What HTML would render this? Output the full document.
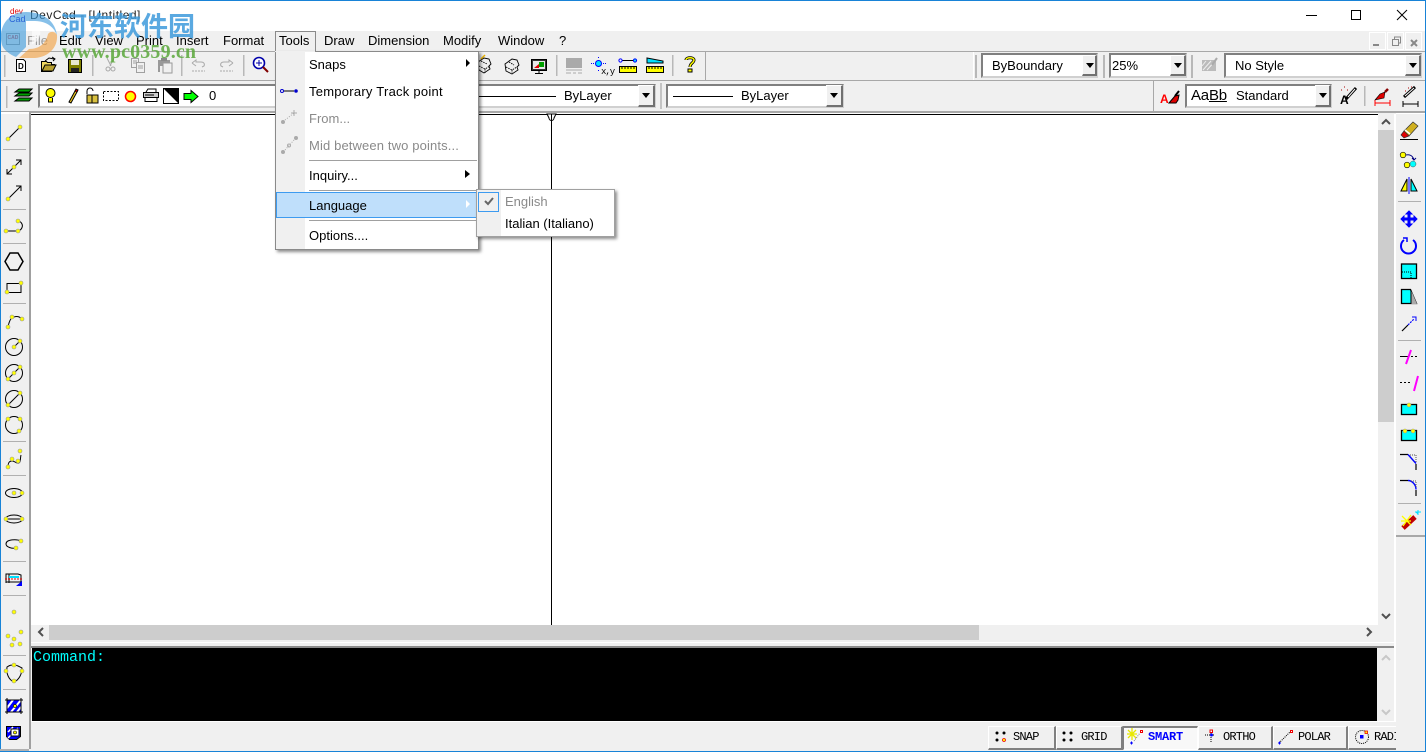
<!DOCTYPE html>
<html><head><meta charset="utf-8"><title>DevCad</title>
<style>
html,body{margin:0;padding:0;background:#f0f0f0}
#r{position:relative;width:1426px;height:752px;overflow:hidden;background:#f0f0f0;font-family:"DejaVu Sans","Liberation Sans",sans-serif;font-size:12px;color:#000}
#r div{position:absolute;box-sizing:border-box}
.t{position:absolute;white-space:nowrap;line-height:16px;font-family:"Liberation Sans",sans-serif;letter-spacing:0;font-size:13px}
.g{color:#8a8a8a}
.c{background:#fff;border:2px solid;border-color:#808080 #d0d0d0 #d0d0d0 #808080}
.d{background:#f0f0f0;border:1px solid;border-color:#fff #707070 #707070 #fff;border-width:1px 2px 2px 1px}
.d:after{content:"";position:absolute;left:3px;top:7px;border:4px solid transparent;border-top:5px solid #000;border-bottom:0}
.s{background:#f0f0f0;border:1px solid;border-color:#fff #808080 #808080 #fff;border-width:1px 2px 2px 1px}
.m{font-family:"Liberation Mono",monospace;font-size:12px;position:absolute;white-space:nowrap;top:731px;line-height:13px;letter-spacing:-.8px}
svg{position:absolute;left:0;top:0}
</style></head><body><div id="r">
<!-- title -->
<div style="left:0;top:0;width:1426px;height:31px;background:#fff"></div>
<div style="left:0;top:0;width:1426px;height:1px;background:#1883d7"></div>
<span class="t" style="left:30px;top:7px;font-size:12px;letter-spacing:.5px;color:#222">DevCad - [Untitled]</span>
<!-- menu bar -->
<div style="left:0;top:51px;width:1426px;height:1px;background:#a8a8a8"></div>
<span class="t" style="left:27px;top:33px;color:#999">File</span>
<span class="t" style="left:59px;top:33px">Edit</span>
<span class="t" style="left:95px;top:33px">View</span>
<span class="t" style="left:136px;top:33px">Print</span>
<span class="t" style="left:176px;top:33px">Insert</span>
<span class="t" style="left:223px;top:33px">Format</span>
<span class="t" style="left:324px;top:33px">Draw</span>
<span class="t" style="left:368px;top:33px">Dimension</span>
<span class="t" style="left:443px;top:33px">Modify</span>
<span class="t" style="left:498px;top:33px">Window</span>
<span class="t" style="left:559px;top:33px">?</span>
<!-- toolbars -->
<div style="left:0;top:80px;width:1426px;height:1px;background:#a8a8a8"></div>
<div style="left:0;top:111px;width:1426px;height:2px;background:#a8a8a8"></div>
<div style="left:705px;top:52px;width:1px;height:28px;background:#a8a8a8"></div>
<div style="left:973px;top:52px;width:1px;height:28px;background:#fff"></div>
<div style="left:1153px;top:81px;width:1px;height:30px;background:#a8a8a8"></div>
<div class="c" style="left:981px;top:53px;width:117px;height:25px"></div>
<div class="d" style="left:1082px;top:55px;width:15px;height:21px"></div>
<span class="t" style="left:992px;top:58px">ByBoundary</span>
<div class="c" style="left:1109px;top:53px;width:78px;height:25px"></div>
<div class="d" style="left:1170px;top:55px;width:16px;height:21px"></div>
<span class="t" style="left:1112px;top:58px">25%</span>
<div class="c" style="left:1224px;top:53px;width:198px;height:25px"></div>
<div class="d" style="left:1405px;top:55px;width:16px;height:21px"></div>
<span class="t" style="left:1235px;top:58px">No Style</span>
<div class="c" style="left:38px;top:84px;width:240px;height:24px"></div>
<span class="t" style="left:209px;top:88px">0</span>
<div class="c" style="left:470px;top:84px;width:186px;height:24px"></div>
<div class="d" style="left:638px;top:85px;width:17px;height:22px"></div>
<div style="left:479px;top:96px;width:77px;height:1px;background:#000"></div>
<span class="t" style="left:564px;top:88px">ByLayer</span>
<div style="left:660px;top:83px;width:2px;height:26px;background:#c4c4c4"></div>
<div class="c" style="left:666px;top:84px;width:178px;height:24px"></div>
<div class="d" style="left:826px;top:85px;width:17px;height:22px"></div>
<div style="left:673px;top:96px;width:60px;height:1px;background:#000"></div>
<span class="t" style="left:741px;top:88px">ByLayer</span>
<div class="c" style="left:1185px;top:84px;width:147px;height:24px"></div>
<div class="d" style="left:1315px;top:85px;width:16px;height:22px"></div>
<span class="t" style="left:1191px;top:88px;font-size:15px;letter-spacing:-.2px">Aa<u>Bb</u></span>
<span class="t" style="left:1236px;top:88px">Standard</span>
<!-- MDI buttons -->
<div style="left:1369px;top:32px;width:17px;height:18px;border:1px solid #fff"></div>
<div style="left:1387px;top:32px;width:17px;height:18px;border:1px solid #fff"></div>
<div style="left:1405px;top:32px;width:17px;height:18px;border:1px solid #fff"></div>
<!-- drawing -->
<div style="left:29px;top:113px;width:2px;height:636px;background:#a0a0a0"></div>
<div style="left:31px;top:113px;width:1347px;height:512px;background:#fff"></div>
<div style="left:31px;top:114px;width:1347px;height:1px;background:#000"></div>
<div style="left:551px;top:114px;width:1px;height:511px;background:#000"></div>
<!-- v scrollbar -->
<div style="left:1378px;top:114px;width:16px;height:511px;background:#f0f0f0"></div>
<div style="left:1378px;top:130px;width:16px;height:292px;background:#cdcdcd"></div>
<!-- h scrollbar -->
<div style="left:49px;top:625px;width:930px;height:15px;background:#cdcdcd"></div>
<div style="left:31px;top:642px;width:1363px;height:1px;background:#fff"></div>
<div style="left:31px;top:646px;width:1363px;height:2px;background:#8a8a8a"></div>
<!-- command -->
<div style="left:32px;top:648px;width:1345px;height:73px;background:#000"></div>
<div style="left:1394px;top:114px;width:2px;height:608px;background:#fff"></div>
<div style="left:31px;top:721px;width:1365px;height:1px;background:#fff"></div>
<span style="position:absolute;left:33px;top:649px;font:15px/17px 'Liberation Mono',monospace;color:#00ffff;white-space:nowrap">Command:</span>
<!-- right toolbar -->
<div style="left:1396px;top:113px;width:29px;height:1px;background:#fff"></div>
<div style="left:1396px;top:535px;width:29px;height:2px;background:#a8a8a8"></div>
<!-- status bar -->
<div class="s" style="left:988px;top:726px;width:68px;height:24px"></div>
<div class="s" style="left:1056px;top:726px;width:67px;height:24px"></div>
<div style="left:1123px;top:726px;width:75px;height:24px;border:1px solid;border-color:#808080 #fff #fff #808080;border-width:2px 1px 1px 1px;background:#f8f8f8"></div>
<div class="s" style="left:1198px;top:726px;width:75px;height:24px"></div>
<div class="s" style="left:1273px;top:726px;width:75px;height:24px"></div>
<div class="s" style="left:1348px;top:726px;width:60px;height:24px"></div>
<span class="m" style="left:1013px">SNAP</span>
<span class="m" style="left:1081px">GRID</span>
<span class="m" style="left:1148px;color:#00f;font-weight:bold;letter-spacing:-.2px">SMART</span>
<span class="m" style="left:1223px">ORTHO</span>
<span class="m" style="left:1298px">POLAR</span>
<span class="m" style="left:1374px">RADI</span>
<div style="left:1396px;top:722px;width:30px;height:30px;background:#f0f0f0"></div>
<!-- frame -->
<div style="left:0;top:0;width:1px;height:752px;background:#1883d7"></div>
<div style="left:1425px;top:0;width:1px;height:752px;background:#1883d7"></div>
<div style="left:0;top:751px;width:1426px;height:1px;background:#1883d7"></div>

<svg width="1426" height="752" viewBox="0 0 1426 752" fill="none">
<defs><g id="y"><circle r="2" fill="#ffff00" stroke="#999" stroke-width=".6"/></g></defs>
<!-- window controls -->
<path d="M1306 15.500h11" stroke="#000"/>
<rect x="1351.500" y="10.500" width="9" height="9" stroke="#000"/>
<path d="M1397 10l10 10M1407 10l-10 10" stroke="#000"/>
<path d="M1373 45h6" stroke="#888" stroke-width="2"/>
<path d="M1392.500 45.500h6v-6h-6zM1394.500 39v-2h6v6h-2" stroke="#888"/>
<path d="M1411 40l6 6M1417 40l-6 6" stroke="#888" stroke-width="2"/>
<!-- toolbar separators / grips -->
<g fill="#b8b8b8">
<rect x="92" y="55" width="1.500" height="21"/><rect x="181" y="55" width="1.500" height="21"/><rect x="243" y="55" width="1.500" height="21"/>
<rect x="556" y="55" width="1.500" height="21"/><rect x="672" y="55" width="1.500" height="21"/>
<rect x="4" y="55" width="1.500" height="22"/><rect x="6" y="86" width="1.500" height="22"/>
<rect x="975" y="55" width="2" height="23"/><rect x="1103" y="55" width="2" height="23"/><rect x="1191" y="55" width="2" height="23"/>
<rect x="1364" y="86" width="1.500" height="20"/>
</g>
<!-- app icon -->
<text x="10" y="14" font-family="Liberation Sans" font-size="8" fill="#d00">dev</text>
<text x="9" y="22" font-family="Liberation Sans" font-size="9" fill="#00c">Cad</text>
<rect x="6.500" y="33.500" width="13" height="11" stroke="#999" fill="#eee"/>
<text x="7.500" y="39" font-family="Liberation Sans" font-size="5" font-weight="bold" fill="#c44">CAD</text>
<!-- toolbar1 icons -->
<path d="M16.500 59.500h7l2 2v10h-9z" fill="#fff" stroke="#000"/><text x="18" y="69" font-family="Liberation Sans" font-size="8" font-weight="bold" fill="#000">D</text>
<path d="M41.500 71.500v-10h5l1 1h4v2h3l-3 7z" fill="#f0d860" stroke="#000"/><path d="M45 61l4-3 5 1M52 57l3 2-2 2" stroke="#000"/><path d="M42 71l3-6h11l-3 6z" fill="#b8a030" stroke="#000"/>
<rect x="68.500" y="59.500" width="13" height="13" fill="#808000" stroke="#000"/><rect x="71" y="60" width="8" height="5" fill="#e8e8d0"/><rect x="71" y="68" width="8" height="4" fill="#222"/>
<g stroke="#a8a8a8"><path d="M107 58l4 8M114 58l-4 8"/><circle cx="108" cy="69" r="2"/><circle cx="113" cy="69" r="2"/></g>
<g stroke="#a0a0a0" fill="#f0f0f0"><path d="M131.500 58.500h7v9h-7z"/><path d="M136.500 62.500h8v10h-8z"/><path d="M133 61h4M133 63h3M138 66h5M138 68h5"/></g>
<path d="M158 60h12v3h-2v3h-8v6h-2z" fill="#999"/><rect x="163" y="63" width="9" height="10" fill="#f0f0f0" stroke="#999"/><rect x="161" y="58" width="6" height="3" fill="#888"/>
<path d="M192 63l4-3v2h5c3 0 4 2 3 4l-2 1M192 63l4 3" stroke="#aaa"/><path d="M192 71h13" stroke="#aaa" stroke-dasharray="2 1"/>
<path d="M233 63l-4-3v2h-5c-3 0-4 2-3 4l2 1M233 63l-4 3" stroke="#aaa"/><path d="M220 71h13" stroke="#aaa" stroke-dasharray="2 1"/>
<circle cx="259" cy="63" r="5.500" fill="#fff" stroke="#00a" stroke-width="1.600"/><path d="M256 63h6M259 60v6" stroke="#00a"/><path d="M263 67l5 5" stroke="#800000" stroke-width="2"/>
<!-- toolbar1 right group -->
<g stroke="#000" fill="#f0f0f0" stroke-width=".9"><path d="M478 62l6-4 5 1 2 5-2 2 1 3-6 4-5-3-1-4z"/><path d="M479 66l6 3 5-3M485 69v4M481 61l6 3" fill="none" stroke-dasharray="1.500 1"/><path d="M505 64l7-5 5 1 2 5-2 2 1 3-6 4-6-3z"/><path d="M506 67l6 3 5-3M512 70v3M509 62l5 3" fill="none" stroke-dasharray="1.500 1"/></g>
<path d="M481 59l4-4" stroke="#e8b000" stroke-width="1.500"/>
<rect x="531.500" y="59.500" width="15" height="11" fill="#fff" stroke="#000"/><rect x="532.500" y="60.500" width="13" height="9" fill="#e8e8e8" stroke="#333"/><path d="M534 68l5-4v4z" fill="#e00000"/><rect x="539" y="62" width="5" height="5" fill="#00a000"/><path d="M539 71v2M535 73.500h8" stroke="#000"/>
<g fill="#aaa"><rect x="566" y="58" width="16" height="10"/></g><path d="M566 70h16M566 73h5M573 73h3M578 73h4" stroke="#aaa"/>
<circle cx="598.500" cy="63.500" r="3" fill="#00e0ff" stroke="#00f"/><path d="M598.500 58v-2M598.500 71v-2M591 63.500h3M603 63.500h3" stroke="#00f" stroke-dasharray="1 1"/><text x="601" y="74" font-family="Liberation Mono" font-size="9" letter-spacing="-1" fill="#000">x,y</text>
<path d="M622 60.500h12" stroke="#000"/><circle cx="620.500" cy="60.500" r="1.600" fill="#fff" stroke="#00f"/><circle cx="635" cy="60.500" r="1.600" fill="#00e0ff" stroke="#00f"/>
<rect x="619.500" y="66.500" width="17" height="6" fill="#ffff00" stroke="#000"/><path d="M622 67v2M625 67v2M628 67v2M631 67v2M634 67v2" stroke="#000"/>
<path d="M647 58v5h16v-2z" fill="#00e0ff" stroke="#000"/><rect x="646.500" y="66.500" width="17" height="6" fill="#ffff00" stroke="#000"/><path d="M649 67v2M652 67v2M655 67v2M658 67v2M661 67v2" stroke="#000"/>
<path d="M686 60c0-3 8-3 8 0 0 3-4 3-4 7" stroke="#000" stroke-width="3"/><path d="M686 60c0-3 8-3 8 0 0 3-4 3-4 7" stroke="#ff0" stroke-width="1.400"/><rect x="688" y="69" width="4" height="3" fill="#ff0" stroke="#000"/>
<!-- right row1 hatch -->
<rect x="1202" y="60" width="14" height="11" fill="#bbb"/><path d="M1203 70l8-9M1207 70l8-9M1202 66l4-5" stroke="#eee"/><path d="M1212 65l5-7" stroke="#aaa" stroke-width="2"/>
<!-- toolbar2 -->
<g stroke="#000" fill="#00a000"><path d="M15 92h14l3-3h-13z"/><path d="M15 96h14l3-3h-13z"/><path d="M15 101h14l3-3h-13z"/></g>
<circle cx="50.500" cy="93" r="4.500" fill="#ff0" stroke="#000"/><path d="M48.500 98v4h4v-4" fill="#ff0" stroke="#000"/>
<path d="M69 102l6-11 2 1-6 11z" fill="#e8c020" stroke="#000"/><path d="M75 91l1-2 2 1-1 2" fill="#d00" stroke="#000"/>
<path d="M87 94v-3a3 3 0 0 1 6 0" stroke="#000"/><path d="M87 103v-8h11v8z" fill="#d8c040" stroke="#000"/><path d="M92 95v8" stroke="#000"/>
<rect x="103.500" y="91.500" width="15" height="9" stroke="#000" stroke-dasharray="2 1.500"/>
<circle cx="130.500" cy="96.500" r="5" fill="#ff0" stroke="#f00" stroke-width="1.500"/>
<path d="M146 92l2-3h8v3" fill="#fff" stroke="#000"/><rect x="143.500" y="92.500" width="15" height="5" fill="#ccc" stroke="#000"/><path d="M145 97.500h12v4h-12z" fill="#fff" stroke="#000"/><path d="M145 95h9" stroke="#000"/>
<rect x="163.500" y="88.500" width="15" height="15" fill="#fff" stroke="#000"/><path d="M164 89h15v15z" fill="#000"/>
<path d="M184 93.500h7v-3l7 6-7 6v-3h-7z" fill="#00ff00" stroke="#000"/>
<!-- toolbar2 right -->
<text x="1160" y="103" font-family="Liberation Sans" font-weight="bold" font-size="12" fill="#f00">A</text>
<path d="M1169 103l6-7 4-1-1 5-2 3z" fill="#d00" stroke="#000"/><path d="M1175 96l4-5" stroke="#000" stroke-width="2"/>
<text x="1340" y="104" font-family="Liberation Sans" font-weight="bold" font-size="12" fill="#000">A</text>
<path d="M1346 99l10-11" stroke="#000" stroke-width="3"/><path d="M1348 97l7-8" stroke="#fff"/><path d="M1341 90h1M1344 87h1M1347 90h1" stroke="#a00"/>
<path d="M1375 100l5-6 5-2-1 6z" fill="#d00" stroke="#000" stroke-width=".6"/><path d="M1385 92l3-3" stroke="#800" stroke-width="2.500"/><path d="M1375 103h15M1375 100v6M1390 100v6" stroke="#f00"/>
<path d="M1404 97l11-10" stroke="#000" stroke-width="3"/><path d="M1405 96l9-8" stroke="#fff"/><path d="M1403 104h15M1403 101v6M1418 101v6" stroke="#000"/><path d="M1405 91h1M1408 88h1M1411 87h1" stroke="#a00"/>
<!-- aperture -->
<path d="M547 114h9l-2 4a2.500 2.500 0 0 1-5 0z" fill="#fff" stroke="#000"/><path d="M551.500 114v6" stroke="#000"/>
<!-- scroll arrows -->
<g stroke="#505050" stroke-width="2"><path d="M1382 124l4-4 4 4M1382 614l4 4 4-4M43 628l-4 4 4 4M1367 628l4 4-4 4"/></g>
<g stroke="#c8c8c8" stroke-width="2"><path d="M1382 660l4-4 4 4M1382 710l4 4 4-4"/></g>
<!-- left toolbar separators -->
<g fill="#b0b0b0"><rect x="3" y="149" width="23" height="1"/><rect x="3" y="209" width="23" height="1"/><rect x="3" y="243" width="23" height="1"/><rect x="3" y="303" width="23" height="1"/><rect x="3" y="441" width="23" height="1"/><rect x="3" y="475" width="23" height="1"/><rect x="3" y="561" width="23" height="1"/><rect x="3" y="595" width="23" height="1"/><rect x="3" y="655" width="23" height="1"/><rect x="3" y="689" width="23" height="1"/><rect x="0" y="749" width="29" height="2"/>
<rect x="1398" y="201" width="23" height="1"/><rect x="1398" y="340" width="23" height="1"/><rect x="1398" y="503" width="23" height="1"/></g>
<rect x="1" y="112" width="28" height="2" fill="#fff"/>
<!-- left tool icons -->
<g stroke="#000" stroke-width="1">
<path d="M8 139l12-12"/>
<path d="M7 174l14-14M7 169v5h5M16 160h5v5" />
<path d="M8 199l13-13M16 186h5v5"/>
<path d="M6 231h12c4-1 5-5 4-7-1-2-2-3-4-3"/>
<path d="M10 253h8l5 8.500-5 8.500h-8l-5-8.500z" stroke-width="1.500"/>
<path d="M7 283.500h14v9h-14z"/>
<path d="M8 327c1-5 3-10 6-10 3-1 6 0 8 2"/>
<circle cx="14" cy="347" r="8.500"/><path d="M14 347l6-6"/>
<circle cx="14" cy="373" r="8.500"/><path d="M8 379l12-12"/>
<circle cx="14" cy="399" r="8.500"/><path d="M8 405l12-12"/>
<circle cx="14" cy="425" r="8.500"/>
<path d="M8 467c0-4 1-6 4-6s3 2 6 2 2-4 3-8"/>
<ellipse cx="14" cy="493" rx="8.500" ry="4.500"/>
<ellipse cx="14" cy="519" rx="8.500" ry="4"/><path d="M6 519h16"/>
<path d="M21 541c-4-2-15-2-15 3 0 3 6 5 10 4"/>
<path d="M6 574h12l3 1v7h-15z"/>
<path d="M6 574v9M9 574v9"/>
<path d="M7 667c3-2 4-2 7-2s4 1 8 3c0 6-3 12-8 14-5-2-8-8-7-15z"/>
</g>
<path d="M5 579h17" stroke="#e00" stroke-dasharray="2 1"/><path d="M9 576h10v2h-10z" fill="#00e0ff"/><path d="M16 586l6-5v5z" fill="#00f"/>
<use href="#y" x="8" y="139"/><use href="#y" x="20" y="127"/>
<use href="#y" x="14" y="167"/>
<use href="#y" x="8" y="199"/>
<use href="#y" x="6" y="231"/><use href="#y" x="18" y="231"/><use href="#y" x="18" y="221"/>
<use href="#y" x="7" y="292"/><use href="#y" x="21" y="283"/>
<use href="#y" x="8" y="327"/><use href="#y" x="12" y="317"/><use href="#y" x="22" y="319"/>
<use href="#y" x="14" y="347"/><use href="#y" x="20" y="341"/>
<use href="#y" x="8" y="379"/><use href="#y" x="14" y="373"/><use href="#y" x="20" y="367"/>
<use href="#y" x="8" y="405"/><use href="#y" x="20" y="393"/>
<use href="#y" x="8" y="419"/><use href="#y" x="20" y="419"/><use href="#y" x="19" y="431"/>
<use href="#y" x="8" y="467"/><use href="#y" x="12" y="459"/><use href="#y" x="18" y="461"/><use href="#y" x="20" y="451"/>
<use href="#y" x="14" y="493"/><use href="#y" x="22" y="493"/>
<use href="#y" x="6" y="519"/><use href="#y" x="22" y="519"/>
<use href="#y" x="21" y="541"/><use href="#y" x="16" y="548"/>
<use href="#y" x="14" y="612"/>
<use href="#y" x="8" y="636"/><use href="#y" x="21" y="632"/><use href="#y" x="14" y="639"/><use href="#y" x="12" y="645"/><use href="#y" x="20" y="644"/>
<use href="#y" x="14" y="665"/><use href="#y" x="6" y="671"/><use href="#y" x="22" y="671"/><use href="#y" x="14" y="681"/>
<!-- hatch -->
<rect x="7" y="700" width="14" height="12" fill="#00f"/><path d="M7 708l6-8M11 712l10-12M17 712l4-5" stroke="#fff" stroke-width="2"/><path d="M5 700h18M5 712h18M7 698v16M21 698v16" stroke="#000"/><circle cx="15" cy="706" r="1.600" fill="#ff0" stroke="#000" stroke-width=".6"/>
<path d="M6.500 726.500h14v10l-4 3h-7l-3-3z" fill="#00f" stroke="#000"/><path d="M8 732l5-5M8 738l10-10" stroke="#fff" stroke-width="1.500"/><rect x="11" y="729" width="8" height="7" fill="#fff" stroke="#000"/><circle cx="15" cy="732.500" r="1.500" fill="#ff0" stroke="#000" stroke-width=".6"/>
<!-- right tool icons -->
<path d="M1400 139.500h18" stroke="#000"/><path d="M1404 131l9-9 5 4-9 10z" fill="#d0b020" stroke="#333" stroke-width=".7"/><path d="M1404 131l-3 4 3 3 5-2z" fill="#e00000" stroke="#333" stroke-width=".7"/><path d="M1405 130l5 4" stroke="#fff" stroke-width="1.500"/>
<circle cx="1403" cy="155" r="2.800" fill="#ff0" stroke="#000" stroke-width=".6"/><circle cx="1407" cy="165" r="2.800" fill="#ff0" stroke="#000" stroke-width=".6"/><circle cx="1413" cy="164" r="3" fill="#00ffff" stroke="#555" stroke-width=".5"/><path d="M1406 155c4-1 7 1 8 5M1412 158l2 2 2-2" stroke="#000080"/>
<path d="M1407 179l-6 12h6z" fill="#ff0" stroke="#000"/><path d="M1411 179l6 12h-6z" fill="#00ffff" stroke="#000"/><path d="M1409 177v17" stroke="#00f"/>
<path d="M1409 211l3 3h-2v4h4v-2l3 3-3 3v-2h-4v4h2l-3 3-3-3h2v-4h-4v2l-3-3 3-3v2h4v-4h-2z" fill="#00f" stroke="#00f"/>
<path d="M1404 240a7.500 7.500 0 1 0 9 0" stroke="#00f" stroke-width="2"/><path d="M1403 238h4v4" stroke="#00f" stroke-width="1.500"/>
<rect x="1401.500" y="264" width="15" height="14.500" fill="#00ffff" stroke="#000" stroke-width="1.300"/><path d="M1402 272h9v7" stroke="#000" stroke-dasharray="1 1"/>
<path d="M1401.500 289.500h9l6 14h-15z" fill="#00ffff" stroke="#000" stroke-width="1.300"/><path d="M1411 290l6 14h-6z" fill="#aaa"/><path d="M1411 290v14" stroke="#000"/>
<path d="M1402 331l6-6" stroke="#000" stroke-width="1.200"/><path d="M1408 325l6-6" stroke="#00f" stroke-dasharray="2 1" stroke-width="1.200"/><path d="M1412 317h4v4" stroke="#00f"/>
<path d="M1400 356.500h9" stroke="#000"/><path d="M1411 356.500h2M1415 356.500h2" stroke="#000"/><path d="M1406 364l5-14" stroke="#f0f" stroke-width="2"/>
<path d="M1400 382.500h2M1404 382.500h2M1408 382.500h2" stroke="#000"/><path d="M1414 391l4-15" stroke="#f0f" stroke-width="2"/>
<rect x="1401.500" y="404.500" width="15" height="10" fill="#00ffff" stroke="#000" stroke-width="1.300"/><use href="#y" x="1409" y="405"/>
<rect x="1401.500" y="430.500" width="15" height="10" fill="#00ffff" stroke="#000" stroke-width="1.300"/><use href="#y" x="1405" y="431"/><use href="#y" x="1413" y="431"/>
<path d="M1400 454.500h8M1416 464v6" stroke="#000" stroke-width="1.200"/><path d="M1408 454.500l8 9" stroke="#00f" stroke-width="1.400"/><path d="M1410 455h6v7" stroke="#555" stroke-dasharray="1 1"/>
<path d="M1400 480.500h8M1416 490v6" stroke="#000" stroke-width="1.200"/><path d="M1408 480.500c4 0 8 4 8 9" stroke="#00f" stroke-width="1.400"/><path d="M1411 481h5v6" stroke="#555" stroke-dasharray="1 1"/>
<path d="M1403 528l12-11" stroke="#c00000" stroke-width="5"/><path d="M1402 516l9 9M1411 515l-8 11M1401 521h10" stroke="#ff0" stroke-width="1.300"/><path d="M1416 512l2 2M1418 510v5M1415 512h6" stroke="#00e0ff"/>
<!-- status icons -->
<g fill="#000"><circle cx="997" cy="733" r="1.500"/><circle cx="1004" cy="733" r="1.500"/><circle cx="997" cy="740" r="1.500"/><circle cx="1064" cy="733" r="1.500"/><circle cx="1071" cy="733" r="1.500"/><circle cx="1064" cy="740" r="1.500"/><circle cx="1071" cy="740" r="1.500"/></g>
<circle cx="1004" cy="740" r="1.500" fill="#ff0" stroke="#e00" stroke-width=".8"/>
<path d="M1128 730l8 8M1136 730l-8 8M1132 728v12M1127 734h10" stroke="#e8e800" stroke-width="1.300"/>
<rect x="1140.500" y="730.500" width="2" height="2" fill="#fff" stroke="#e00"/><path d="M1130 743h3M1131.500 741.500v3" stroke="#00f"/><path d="M1134 741l6-8" stroke="#888" stroke-dasharray="1 1"/>
<path d="M1205 735h10M1211 731v12" stroke="#000" stroke-dasharray="1 1"/><circle cx="1211.500" cy="735" r="1.500" fill="#00f"/><rect x="1210" y="730" width="2.500" height="2.500" fill="#fff" stroke="#e00"/>
<path d="M1279 743l12-12" stroke="#000" stroke-dasharray="1 1"/><rect x="1290.500" y="730.500" width="2" height="2" fill="#fff" stroke="#e00"/><path d="M1278 743h3M1279.500 741.500v3" stroke="#00f"/>
<circle cx="1362" cy="737" r="6.500" stroke="#000" stroke-dasharray="1 1"/><rect x="1360" y="735" width="3.500" height="3.500" fill="#00f"/><rect x="1365" y="731" width="2.500" height="2.500" fill="#ff0" stroke="#e00" stroke-width=".8"/>
<!-- watermark -->
<g opacity=".62">
<path d="M2 45C-3 25 10 12 26 12c18 0 30 10 31 24-2-8-10-15-22-15H26v26l-10 10C9 54 4 50 2 45z" fill="#3e9bdc"/>
<path d="M32 25c6 0 9 5 8 10-1 5-4 8-8 9z" fill="#fff"/>
<path d="M57 35c1 13-9 22-22 23H19l10-9c11 0 17-6 19-15 2-3 7-3 9 1z" fill="#f2a040"/>
</g>
</svg>
<span style="position:absolute;left:60px;top:9px;font:bold 27px/32px 'Noto Sans CJK SC',sans-serif;color:#3e9bdc;opacity:.85;white-space:nowrap;letter-spacing:0">河东软件园</span>
<span style="position:absolute;left:62px;top:42px;font:bold 20px/20px 'Liberation Serif',serif;color:#5aa83a;opacity:.85;white-space:nowrap;letter-spacing:.15px">www.pc0359.cn</span>

<!-- Tools tab + menu -->
<div style="left:275px;top:31px;width:41px;height:22px;background:#f0f0f0;border:1px solid #8a8a8a;border-bottom:0"></div>
<span class="t" style="left:279px;top:33px">Tools</span>
<div style="left:275px;top:51px;width:204px;height:199px;background:#fff;border:1px solid #8a8a8a;box-shadow:2px 2px 3px rgba(0,0,0,.45)"></div>
<div style="left:276px;top:52px;width:29px;height:197px;background:#f0f0f0"></div>
<div style="left:275px;top:51px;width:40px;height:1px;background:#f0f0f0"></div>
<div style="left:309px;top:160px;width:168px;height:1px;background:#a0a0a0"></div>
<div style="left:309px;top:190px;width:168px;height:1px;background:#a0a0a0"></div>
<div style="left:309px;top:220px;width:168px;height:1px;background:#a0a0a0"></div>
<div style="left:276px;top:192px;width:203px;height:26px;background:#bfdffb;border:1px solid #3d9bf0"></div>
<span class="t" style="left:309px;top:57px">Snaps</span>
<span class="t" style="left:309px;top:84px;letter-spacing:.25px">Temporary Track point</span>
<span class="t g" style="left:309px;top:111px">From...</span>
<span class="t g" style="left:309px;top:138px;letter-spacing:.13px">Mid between two points...</span>
<span class="t" style="left:309px;top:168px">Inquiry...</span>
<span class="t" style="left:309px;top:198px">Language</span>
<span class="t" style="left:309px;top:228px">Options....</span>
<div style="left:476px;top:189px;width:139px;height:48px;background:#fff;border:1px solid #a0a0a0;box-shadow:2px 2px 3px rgba(0,0,0,.45)"></div>
<div style="left:477px;top:190px;width:24px;height:46px;background:#f0f0f0"></div>
<div style="left:478px;top:192px;width:21px;height:20px;background:#fff0;border:1px solid #3d9bf0"></div>
<span class="t g" style="left:505px;top:194px">English</span>
<span class="t" style="left:505px;top:216px">Italian (Italiano)</span>
<svg width="1426" height="752" viewBox="0 0 1426 752" fill="none">
<path d="M466 59l4 4-4 4zM465 170l5 4-5 4z" fill="#000"/>
<path d="M466 200l4 4-4 4z" fill="#fff"/>
<circle cx="282" cy="91" r="1.500" fill="#fff" stroke="#00c"/><path d="M284 91h10" stroke="#000"/><circle cx="296" cy="91" r="1.800" fill="#00c"/>
<g stroke="#aaa" fill="#aaa"><circle cx="283" cy="122" r="1.500"/><path d="M285 120l9-7" stroke-dasharray="1 1.500"/><path d="M294 110v6M291 113h6" fill="none"/><circle cx="283" cy="152" r="1.500"/><circle cx="289" cy="145.500" r="1.500" fill="#f0f0f0"/><circle cx="296" cy="138" r="1.500"/><path d="M285 150l9-10" stroke-dasharray="1 1.500"/></g>
<path d="M485 201l3 3 5-6" stroke="#666" stroke-width="2"/>
</svg>
</div></body></html>
